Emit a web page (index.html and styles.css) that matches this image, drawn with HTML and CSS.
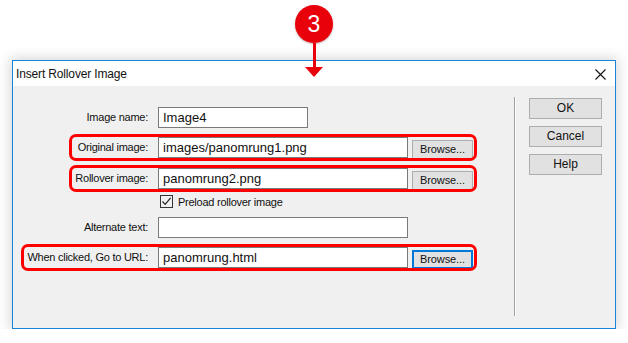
FILE: index.html
```html
<!DOCTYPE html>
<html lang="en">

<head>
    <meta charset="UTF-8">
    <title>Insert Rollover Image</title>
    <link rel="stylesheet" href="styles.css">
</head>

<body>
<div class="marker">
    <div class="marker-num">3</div>
    <div class="marker-stem"></div>
    <svg class="marker-head" width="18" height="10" viewBox="0 0 18 10">
        <polygon points="0,0 18,0 9,10" fill="#e8000b"/>
    </svg>
</div>

<div class="dialog">
    <div class="titlebar">
        <span class="title">Insert Rollover Image</span>
        <svg class="close" width="11" height="11" viewBox="0 0 11 11">
            <path d="M0.5 0.5 L10.5 10.5 M10.5 0.5 L0.5 10.5" stroke="#111" stroke-width="1.1" fill="none"/>
        </svg>
    </div>
    <div class="content">
        <div class="form">
            <div class="row">
                <span class="lbl">Image name:</span>
                <span class="field short">Image4</span>
            </div>
            <div class="row hl">
                <span class="lbl">Original image:</span>
                <span class="field">images/panomrung1.png</span>
                <span class="btn browse">Browse...</span>
            </div>
            <div class="row hl row-3">
                <span class="lbl">Rollover image:</span>
                <span class="field">panomrung2.png</span>
                <span class="btn browse">Browse...</span>
            </div>
            <div class="check-row">
                <span class="check">
                    <svg width="11" height="11" viewBox="0 0 11 11">
                        <path d="M1.5 5.5 L4.2 8.3 L9.6 1.8" stroke="#222" stroke-width="1.2" fill="none"/>
                    </svg>
                </span>
                <span class="check-lbl">Preload rollover image</span>
            </div>
            <div class="row">
                <span class="lbl">Alternate text:</span>
                <span class="field"></span>
            </div>
            <div class="row hl hl-wide">
                <span class="lbl">When clicked, Go to URL:</span>
                <span class="field">panomrung.html</span>
                <span class="btn browse focus">Browse...</span>
            </div>
        </div>
        <div class="sep"></div>
        <div class="actions">
            <span class="btn action">OK</span>
            <span class="btn action">Cancel</span>
            <span class="btn action">Help</span>
        </div>
    </div>
</div>
</body>

</html>
```

FILE: styles.css
```css
html,
body {
    margin: 0;
    background: #fff;
    font-family: "Liberation Sans", Arial, sans-serif;
    color: #111;
}

body {
    padding: 60px 0 0 12px;
}

/* step marker */
.marker {
    position: absolute;
    left: 295px;
    top: 5px;
    width: 38px;
    display: flex;
    flex-direction: column;
    align-items: center;
}

.marker-num {
    width: 38px;
    height: 38px;
    border-radius: 50%;
    background: #e8000b;
    box-shadow: 0 1px 2px rgba(90, 0, 0, 0.35);
    color: #fff;
    font-size: 23px;
    line-height: 38px;
    text-align: center;
}

.marker-stem {
    width: 3px;
    height: 24px;
    background: #e8000b;
}

.marker-head {
    display: block;
}

/* dialog */
.dialog {
    width: 604px;
    height: 269px;
    box-sizing: border-box;
    border: 1px solid #1883d7;
    background: #f0f0f0;
    box-shadow: 0 0 12px 2px rgba(0, 0, 0, 0.16);
}

.titlebar {
    height: 25px;
    background: #fff;
    display: flex;
    align-items: center;
    justify-content: space-between;
    padding: 0 9px 0 3px;
}

.title {
    font-size: 12px;
    letter-spacing: -0.15px;
    padding-top: 1px;
}

.close {
    display: block;
    margin-top: 1px;
}

.content {
    display: flex;
    height: 242px;
}

.form {
    width: 501px;
    padding-top: 21px;
    display: flex;
    flex-direction: column;
}

.row {
    position: relative;
    width: 460px;
    height: 21px;
    display: flex;
    align-items: flex-start;
    margin-bottom: 9px;
}

.row-3 {
    margin-top: 1px;
}

.lbl {
    width: 135px;
    margin-right: 10px;
    text-align: right;
    font-size: 11px;
    letter-spacing: -0.25px;
    line-height: 21px;
}

.field {
    width: 250px;
    height: 21px;
    box-sizing: border-box;
    border: 1px solid #7a7a7a;
    background: #fff;
    padding-left: 4px;
    font-size: 13px;
    line-height: 19px;
}

.field.short {
    width: 150px;
}

.btn {
    box-sizing: border-box;
    border: 1px solid #adadad;
    background: #e1e1e1;
    font-size: 11px;
    text-align: center;
}

.browse {
    width: 61px;
    height: 19px;
    margin: 3px 0 0 4px;
    line-height: 17px;
    letter-spacing: -0.1px;
}

.browse.focus {
    border: 2px solid #0078d7;
    line-height: 15px;
}

/* red highlight around a row */
.hl::after {
    content: "";
    position: absolute;
    left: 56px;
    right: -4px;
    top: -3px;
    bottom: -3px;
    border: 3px solid #f00;
    border-radius: 7px;
}

.hl-wide::after {
    left: 8px;
}

.check-row {
    display: flex;
    align-items: center;
    height: 13px;
    padding-left: 147px;
    margin: -3px 0 9px;
}

.check {
    width: 13px;
    height: 13px;
    box-sizing: border-box;
    border: 1px solid #333;
    display: flex;
    align-items: center;
    justify-content: center;
}

.check svg {
    display: block;
}

.check-lbl {
    margin-left: 5px;
    font-size: 11px;
    letter-spacing: -0.25px;
}

.sep {
    width: 1px;
    margin: 11px 0 12px;
    background: #a0a0a0;
    box-shadow: 1px 0 0 #fff;
}

.actions {
    padding: 12px 0 0 14px;
    display: flex;
    flex-direction: column;
    gap: 7px;
}

.action {
    width: 73px;
    height: 21px;
    font-size: 12px;
    line-height: 19px;
}
```
